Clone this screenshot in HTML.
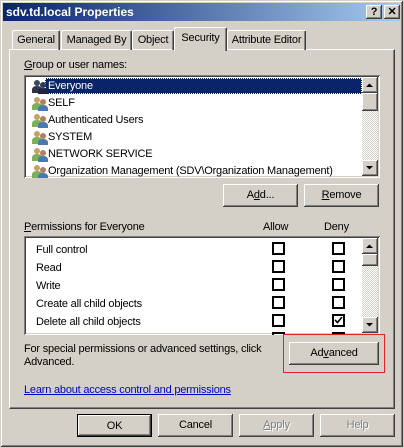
<!DOCTYPE html>
<html><head><style>
*{margin:0;padding:0;box-sizing:border-box}
body{width:404px;height:448px;background:#d4d0c8;font-family:"Liberation Sans",Tahoma,sans-serif;font-size:11px;letter-spacing:-0.2px;color:#000;position:relative;overflow:hidden}
.a{position:absolute}
.win{left:0;top:0;width:404px;height:448px;border:1px solid #d4d0c8;box-shadow:inset -1px -1px #404040,inset 1px 1px #fff,inset -2px -2px #808080}
.title{left:3px;top:3px;width:397px;height:18px;background:linear-gradient(90deg,#0a246a,#a6caf0);color:#fff;font-weight:bold;font-size:12px;letter-spacing:0;line-height:18px;padding-left:3px}
.tb{top:5px;width:16px;height:14px;background:#d4d0c8;box-shadow:inset -1px -1px #404040,inset 1px 1px #fff,inset -2px -2px #808080;font-weight:bold;font-size:11px;line-height:14px;text-align:center;color:#000}
.raised{background:#d4d0c8;box-shadow:inset -1px -1px #404040,inset 1px 1px #fff,inset -2px -2px #808080}
.sunk{background:#fff;box-shadow:inset 1px 1px #808080,inset -1px -1px #fff,inset 2px 2px #404040,inset -2px -2px #d4d0c8}
.tab{top:30px;height:20px;border:1px solid #fff;border-right:1px solid #404040;border-bottom:none;line-height:18px;text-align:center;border-radius:2px 2px 0 0;box-shadow:inset -1px 0 #808080}
.btn{height:23px;line-height:22px;text-align:center}
.cb{width:13px;height:13px;border:2px solid #000;background:#fff}
.row{left:28px;height:17px;line-height:17px;padding-left:20px;white-space:nowrap}
.ico{left:4px;top:1px;width:16px;height:15px}
.pr{left:36px;line-height:14px}
.sb{background:repeating-conic-gradient(#d4d0c8 0 25%,#fff 0 50%) 0 0/2px 2px}
.arr{width:16px;height:16px}
</style></head><body>
<div class="a win"></div>
<div class="a title">sdv.td.local Properties</div>
<div class="a tb" style="left:366px">?</div>
<div class="a tb" style="left:384px">✕</div>

<div class="a" style="left:9px;top:49px;width:386px;height:360px;border:1px solid #fff;border-right-color:#404040;border-bottom-color:#404040;box-shadow:inset -1px -1px #808080"></div>
<div class="a tab" style="left:12px;width:48px">General</div>
<div class="a tab" style="left:61px;width:71px">Managed By</div>
<div class="a tab" style="left:132px;width:42px">Object</div>
<div class="a tab" style="left:174px;width:53px;top:27px;height:24px;background:#d4d0c8;line-height:20px">Security</div>
<div class="a tab" style="left:227px;width:79px">Attribute Editor</div>

<div class="a" style="left:24px;top:59px"><u>G</u>roup or user names:</div>
<div class="a sunk" style="left:24px;top:75px;width:356px;height:103px;overflow:hidden">
  <div class="a" style="left:21px;top:3px;width:317px;height:16px;background:#0a246a;outline:1px dotted #fff;outline-offset:-1px"></div>
  <div class="a row" style="top:3px;left:4px;color:#fff">Everyone<svg class="a ico" viewBox="0 0 16 15"><circle cx="5" cy="4" r="3" fill="#3a4a5a"/><path d="M0 14v-3q0-4 5-4t5 4v3z" fill="#334"/><circle cx="11" cy="6" r="3" fill="#2a3a5a"/><path d="M6 15v-2q0-4 5-4t5 4v2z" fill="#224"/></svg></div>
  <div class="a row" style="top:20px;left:4px">SELF<svg class="a ico" viewBox="0 0 16 15"><circle cx="5" cy="4" r="3" fill="#c8a060"/><path d="M0 14v-3q0-4 5-4t5 4v3z" fill="#7ab05a"/><circle cx="11" cy="6" r="3" fill="#b08060"/><path d="M6 15v-2q0-4 5-4t5 4v2z" fill="#4a78b0"/></svg></div>
  <div class="a row" style="top:37px;left:4px">Authenticated Users<svg class="a ico" viewBox="0 0 16 15"><circle cx="5" cy="4" r="3" fill="#c8a060"/><path d="M0 14v-3q0-4 5-4t5 4v3z" fill="#7ab05a"/><circle cx="11" cy="6" r="3" fill="#b08060"/><path d="M6 15v-2q0-4 5-4t5 4v2z" fill="#4a78b0"/></svg></div>
  <div class="a row" style="top:54px;left:4px">SYSTEM<svg class="a ico" viewBox="0 0 16 15"><circle cx="5" cy="4" r="3" fill="#c8a060"/><path d="M0 14v-3q0-4 5-4t5 4v3z" fill="#7ab05a"/><circle cx="11" cy="6" r="3" fill="#b08060"/><path d="M6 15v-2q0-4 5-4t5 4v2z" fill="#4a78b0"/></svg></div>
  <div class="a row" style="top:71px;left:4px">NETWORK SERVICE<svg class="a ico" viewBox="0 0 16 15"><circle cx="5" cy="4" r="3" fill="#c8a060"/><path d="M0 14v-3q0-4 5-4t5 4v3z" fill="#7ab05a"/><circle cx="11" cy="6" r="3" fill="#b08060"/><path d="M6 15v-2q0-4 5-4t5 4v2z" fill="#4a78b0"/></svg></div>
  <div class="a row" style="top:88px;left:4px">Organization Management (SDV\Organization Management)<svg class="a ico" viewBox="0 0 16 15"><circle cx="5" cy="4" r="3" fill="#c8a060"/><path d="M0 14v-3q0-4 5-4t5 4v3z" fill="#7ab05a"/><circle cx="11" cy="6" r="3" fill="#b08060"/><path d="M6 15v-2q0-4 5-4t5 4v2z" fill="#4a78b0"/></svg></div>
  <div class="a sb" style="left:338px;top:2px;width:16px;height:99px"></div>
  <div class="a raised arr" style="left:338px;top:2px"><svg width="16" height="16"><path d="M4 10h7L7.5 6.5z" fill="#000"/></svg></div>
  <div class="a raised" style="left:338px;top:18px;width:16px;height:18px"></div>
  <div class="a raised arr" style="left:338px;top:85px"><svg width="16" height="16"><path d="M4 6h7L7.5 9.5z" fill="#000"/></svg></div>
</div>

<div class="a raised btn" style="left:223px;top:184px;width:75px"><span>A<u>d</u>d...</span></div>
<div class="a raised btn" style="left:304px;top:184px;width:75px"><u>R</u>emove</div>

<div class="a" style="left:24px;top:221px"><u>P</u>ermissions for Everyone</div>
<div class="a" style="left:263px;top:221px">Allow</div>
<div class="a" style="left:324px;top:221px">Deny</div>
<div class="a sunk" style="left:24px;top:236px;width:356px;height:99px;overflow:hidden">
  <div class="a pr" style="top:7px;left:12px">Full control</div>
  <div class="a pr" style="top:25px;left:12px">Read</div>
  <div class="a pr" style="top:43px;left:12px">Write</div>
  <div class="a pr" style="top:61px;left:12px">Create all child objects</div>
  <div class="a pr" style="top:79px;left:12px">Delete all child objects</div>
  <div class="a cb" style="left:248px;top:6px"></div><div class="a cb" style="left:308px;top:6px"></div>
  <div class="a cb" style="left:248px;top:24px"></div><div class="a cb" style="left:308px;top:24px"></div>
  <div class="a cb" style="left:248px;top:42px"></div><div class="a cb" style="left:308px;top:42px"></div>
  <div class="a cb" style="left:248px;top:60px"></div><div class="a cb" style="left:308px;top:60px"></div>
  <div class="a cb" style="left:248px;top:78px"></div><div class="a cb" style="left:308px;top:78px"><svg width="9" height="9" style="position:absolute;left:0;top:0"><path d="M1 4l2.5 2.5L8 1" stroke="#000" stroke-width="1.6" fill="none"/></svg></div>
  <div class="a cb" style="left:248px;top:96px"></div><div class="a cb" style="left:308px;top:96px"></div>
  <div class="a sb" style="left:338px;top:2px;width:16px;height:95px"></div>
  <div class="a raised arr" style="left:338px;top:2px"><svg width="16" height="16"><path d="M4 10h7L7.5 6.5z" fill="#000"/></svg></div>
  <div class="a raised" style="left:338px;top:18px;width:16px;height:12px"></div>
  <div class="a raised arr" style="left:338px;top:81px"><svg width="16" height="16"><path d="M4 6h7L7.5 9.5z" fill="#000"/></svg></div>
</div>

<div class="a" style="left:24px;top:343px;line-height:13px">For special permissions or advanced settings, click<br>Advanced.</div>
<div class="a" style="left:283px;top:334px;width:102px;height:39px;border:1px solid #e8202a"></div>
<div class="a raised btn" style="left:289px;top:342px;width:90px">Ad<u>v</u>anced</div>

<div class="a" style="left:24px;top:384px;color:#00c;text-decoration:underline">Learn about access control and permissions</div>

<div class="a raised btn" style="left:77px;top:414px;width:75px;border:1px solid #000">OK</div>
<div class="a raised btn" style="left:158px;top:414px;width:75px">Cancel</div>
<div class="a raised btn" style="left:239px;top:414px;width:75px;color:#808080;text-shadow:1px 1px #fff"><u>A</u>pply</div>
<div class="a raised btn" style="left:320px;top:414px;width:75px;color:#808080;text-shadow:1px 1px #fff">Help</div>
</body></html>
